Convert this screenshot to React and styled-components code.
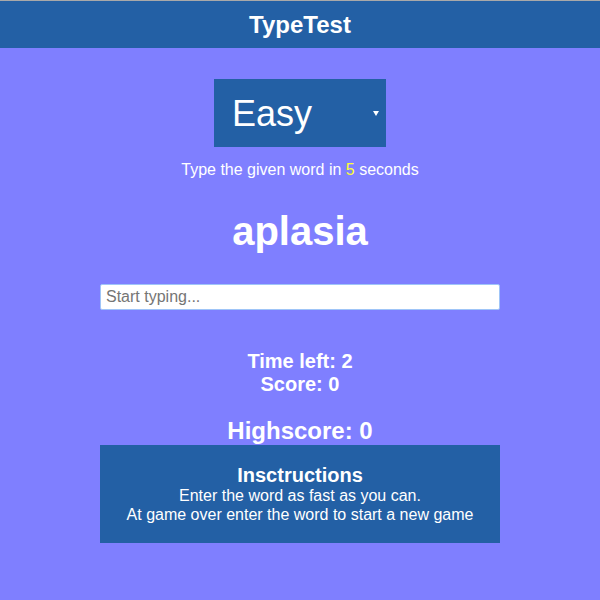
import React, { useState } from 'react';
import styled, { createGlobalStyle } from 'styled-components';

// colours
const headerBlue = '#2360a5';
const pageBlue = '#7f7fff';
const white = '#ffffff';

const GlobalStyle = createGlobalStyle`
  body {
    margin: 0;
    background: ${pageBlue};
    font-family: "Liberation Sans", Arial, sans-serif;
    color: ${white};
  }
`

const Page = styled.div`
  min-height: 600px;
  display: flex;
  flex-direction: column;
  align-items: center;
  text-align: center;
`
const Header = styled.header`
  width: 100%;
  height: 47px;
  background: ${headerBlue};
  border-top: 1px solid #a9a9a9;
  display: flex;
  align-items: center;
  justify-content: center;
  font-size: 24px;
  font-weight: bold;
`
const SelectWrap = styled.div`
  position: relative;
  margin-top: 31px;
  width: 172px;
  height: 68px;
  &::after {
    content: '';
    position: absolute;
    right: 7px;
    top: 32px;
    border-left: 3px solid transparent;
    border-right: 3px solid transparent;
    border-top: 5px solid ${white};
    pointer-events: none;
  }
`
const LevelSelect = styled.select`
  appearance: none;
  width: 100%;
  height: 100%;
  background: ${headerBlue};
  color: ${white};
  border: none;
  border-radius: 0;
  outline: none;
  font-family: inherit;
  font-size: 36px;
  padding: 0 12px 0 18px;
`
const Hint = styled.p`
  margin: 14px 0 0;
  font-size: 16px;
  line-height: 18px;
`
const Seconds = styled.span`
  color: #ffff33;
`
const Word = styled.h2`
  margin: 29px 0 0;
  font-size: 40px;
  line-height: 46px;
`
const TypeInput = styled.input`
  margin-top: 30px;
  width: 400px;
  height: 26px;
  box-sizing: border-box;
  border: 1px solid #9fc5f8;
  border-radius: 2px;
  padding: 0 5px;
  font-family: inherit;
  font-size: 16px;
  color: #333;
  outline: none;
  &::placeholder {
    color: #757575;
  }
`
const Stats = styled.div`
  margin-top: 40px;
  font-size: 20px;
  font-weight: bold;
  line-height: 23px;
`
const Highscore = styled.h3`
  margin: 21px 0 0;
  font-size: 24px;
  line-height: 28px;
`
const Instructions = styled.section`
  width: 400px;
  box-sizing: border-box;
  background: ${headerBlue};
  padding: 20px 0 19px;
  font-size: 16px;
  line-height: 19px;
`
const InstructionsTitle = styled.h4`
  margin: 0;
  font-size: 20px;
  line-height: 21px;
`

function App() {
  const [level, setLevel] = useState('easy');
  const [text, setText] = useState('');

  return (
    <Page>
      <GlobalStyle />
      <Header>TypeTest</Header>
      <SelectWrap>
        <LevelSelect value={level} onChange={e => setLevel(e.target.value)}>
          <option value="easy">Easy</option>
          <option value="medium">Medium</option>
          <option value="hard">Hard</option>
        </LevelSelect>
      </SelectWrap>
      <Hint>Type the given word in <Seconds>5</Seconds> seconds</Hint>
      <Word>aplasia</Word>
      <TypeInput
        autoFocus
        placeholder="Start typing..."
        value={text}
        onChange={e => setText(e.target.value)}
      />
      <Stats>
        <div>Time left: 2</div>
        <div>Score: 0</div>
      </Stats>
      <Highscore>Highscore: 0</Highscore>
      <Instructions>
        <InstructionsTitle>Insctructions</InstructionsTitle>
        <div>Enter the word as fast as you can.</div>
        <div>At game over enter the word to start a new game</div>
      </Instructions>
    </Page>
  );
}

export default App;
